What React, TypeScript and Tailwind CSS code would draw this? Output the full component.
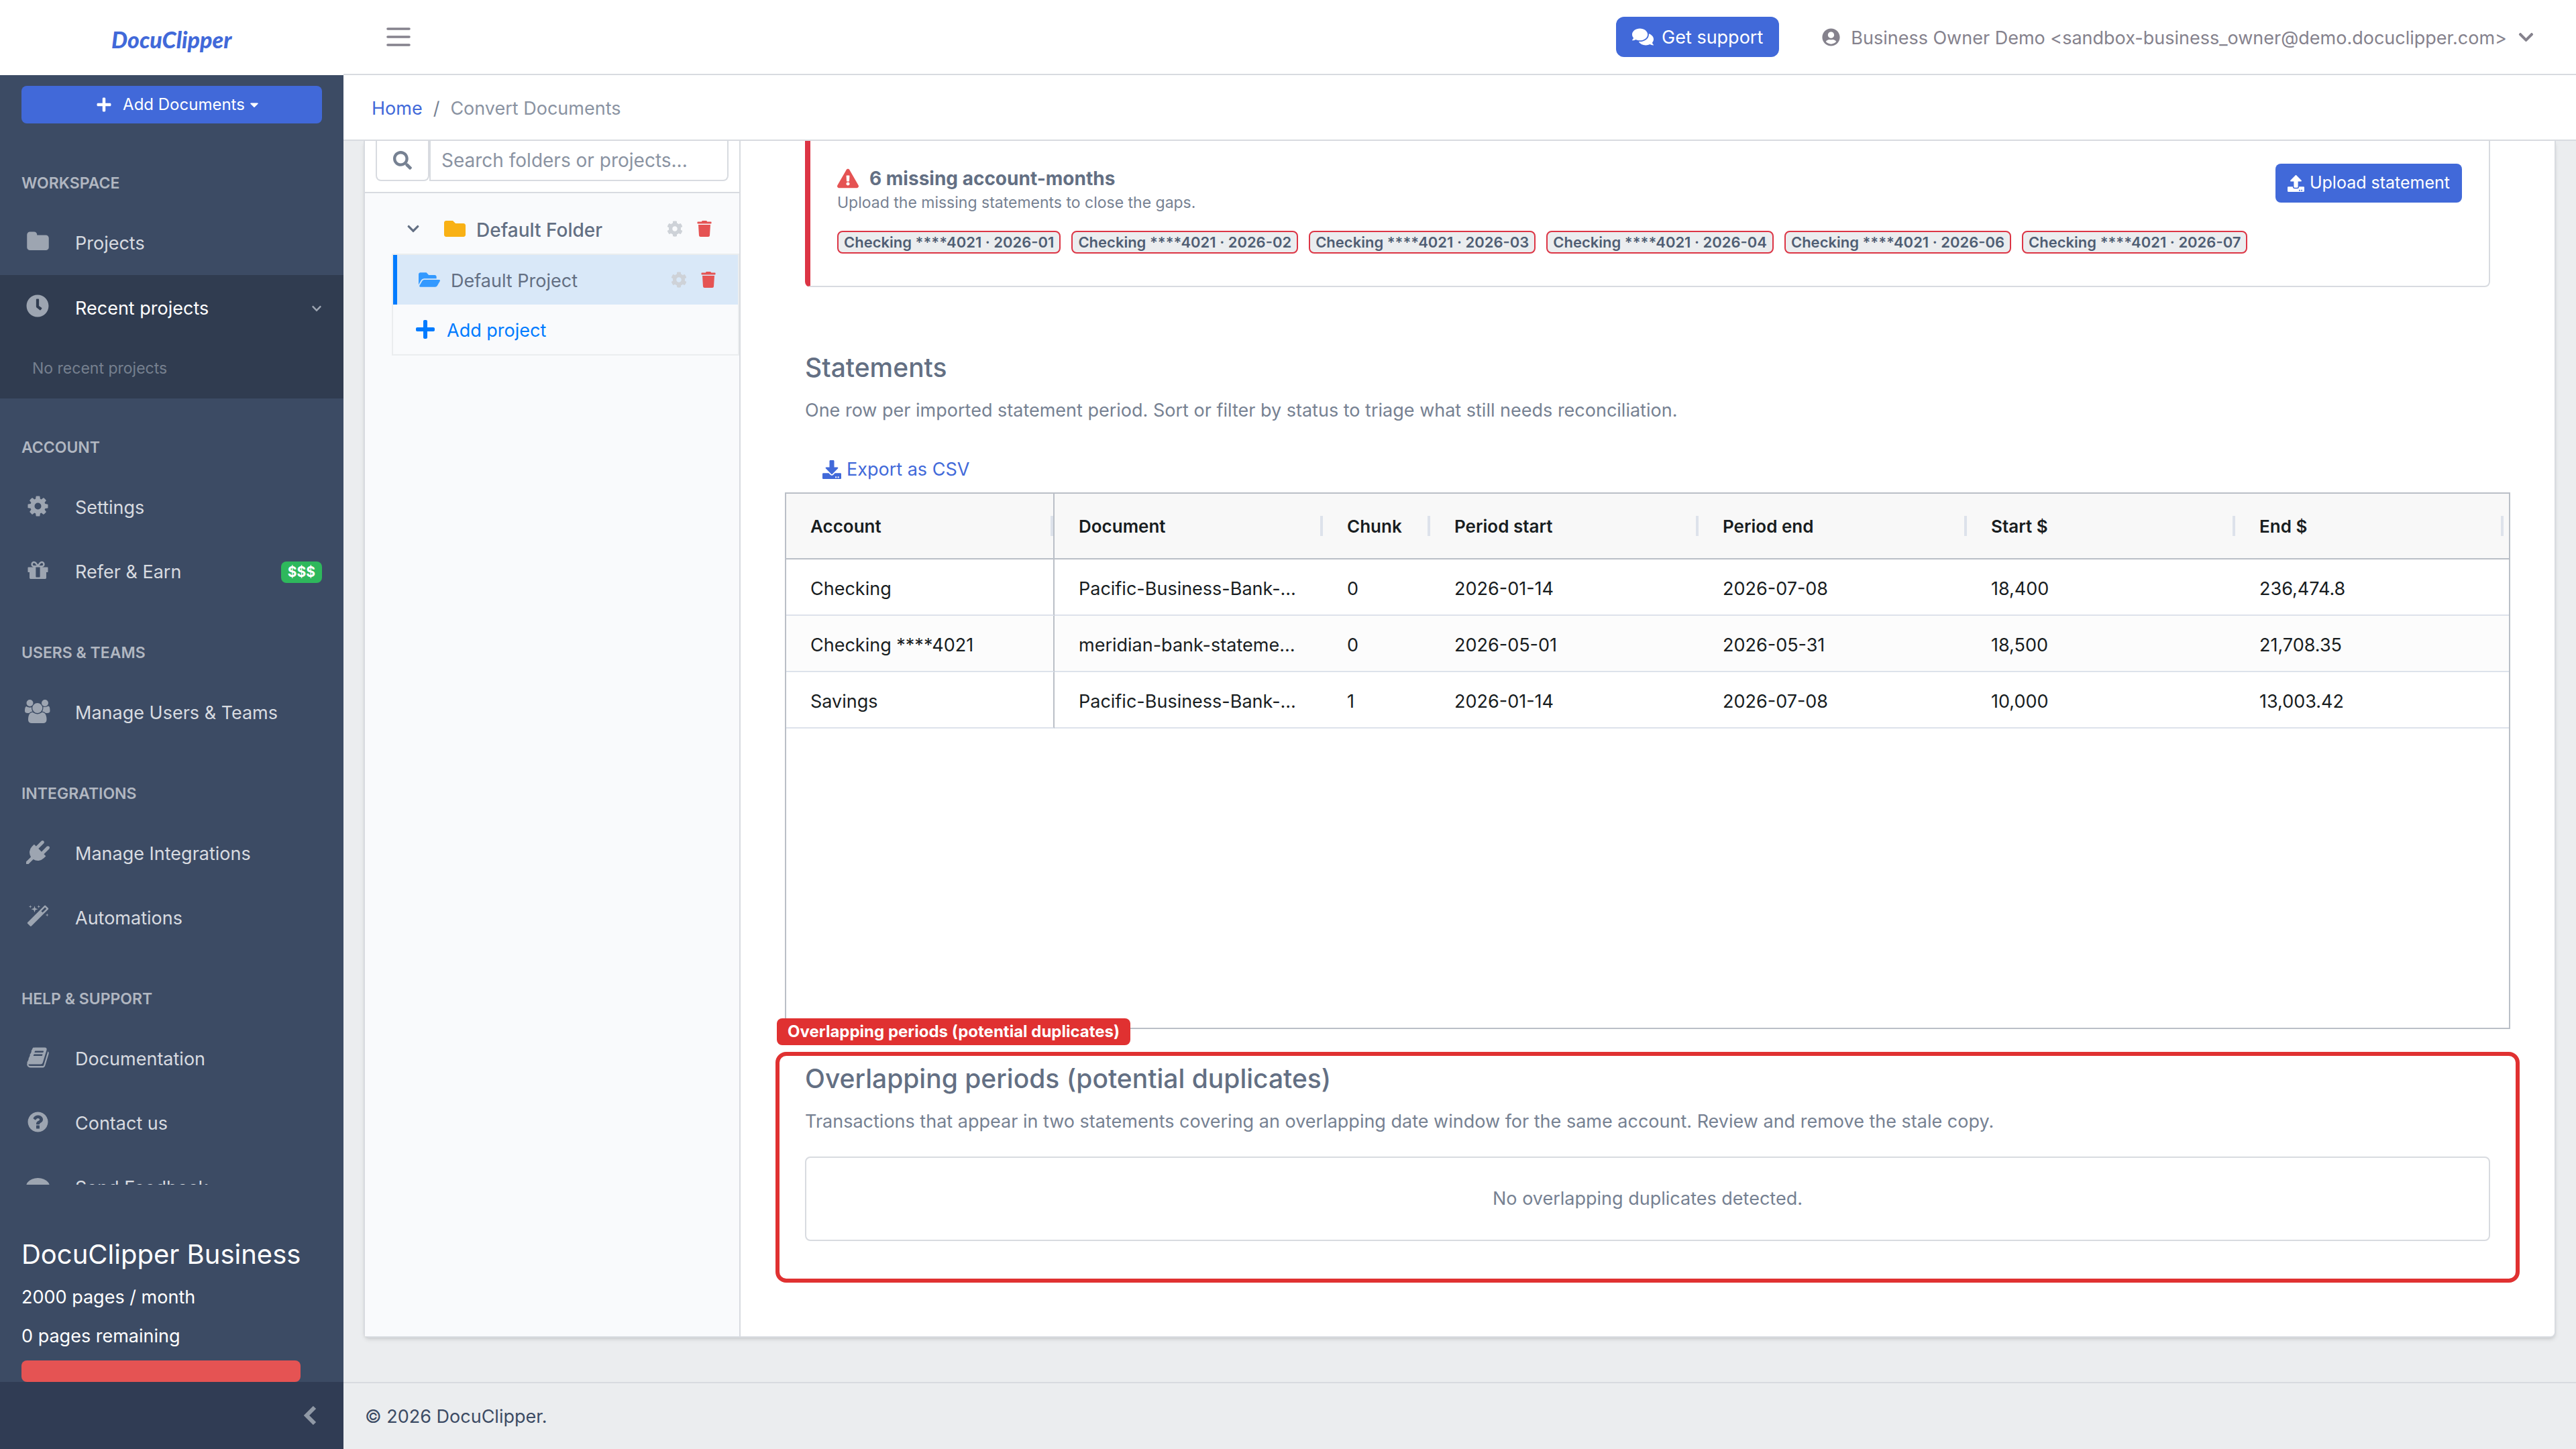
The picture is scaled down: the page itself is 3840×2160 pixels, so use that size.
import type { ReactNode } from "react";
import {
  FaChevronDown, FaCaretDown, FaClock, FaCog, FaComments, FaDownload, FaExclamationTriangle,
  FaFolder, FaFolderOpen, FaPlus, FaSearch, FaTrash, FaUpload, FaUserCircle,
} from "react-icons/fa";

const icons = {
  folder: "M1728 608v704q0 92-66 158t-158 66h-1216q-92 0-158-66t-66-158v-960q0-92 66-158t158-66h320q92 0 158 66t66 158v32h672q92 0 158 66t66 158z",
  cog: "M1152 896q0-106-75-181t-181-75-181 75-75 181 75 181 181 75 181-75 75-181zm512-109v222q0 12-8 23t-20 13l-185 28q-19 54-39 91 35 50 107 138 10 12 10 25t-9 23q-27 37-99 108t-94 71q-12 0-26-9l-138-108q-44 23-91 38-16 136-29 186-7 28-36 28h-222q-14 0-24.5-8.5t-11.5-21.5l-28-184q-49-16-90-37l-141 107q-10 9-25 9-14 0-25-11-126-114-165-168-7-10-7-23 0-12 8-23 15-21 51-66.5t54-70.5q-27-50-41-99l-183-27q-13-2-21-12.5t-8-23.5v-222q0-12 8-23t19-13l186-28q14-46 39-92-40-57-107-138-10-12-10-24 0-10 9-23 26-36 98.5-107.5t94.5-71.5q13 0 26 10l138 107q44-23 91-38 16-136 29-186 7-28 36-28h222q14 0 24.5 8.5t11.5 21.5l28 184q49 16 90 37l142-107q9-9 24-9 13 0 25 10 129 119 165 170 7 8 7 22 0 12-8 23-15 21-51 66.5t-54 70.5q26 50 41 98l183 28q13 2 21 12.5t8 23.5z",
  gift: "M1056 1356v-716h-320v716q0 25 18 38.5t46 13.5h192q28 0 46-13.5t18-38.5zm-456-844h195l-126-161q-26-31-69-31-40 0-68 28t-28 68 28 68 68 28zm688-96q0-40-28-68t-68-28q-43 0-69 31l-125 161h194q40 0 68-28t28-68zm376 256v320q0 14-9 23t-23 9h-96v416q0 40-28 68t-68 28h-1088q-40 0-68-28t-28-68v-416h-96q-14 0-23-9t-9-23v-320q0-14 9-23t23-9h440q-93 0-158.5-65.5t-65.5-158.5 65.5-158.5 158.5-65.5q107 0 168 77l128 165 128-165q61-77 168-77 93 0 158.5 65.5t65.5 158.5-65.5 158.5-158.5 65.5h440q14 0 23 9t9 23z",
  users: "M593 896q-162 5-265 128h-134q-82 0-138-40.5t-56-118.5q0-353 124-353 6 0 43.5 21t97.5 42.5 119 21.5q67 0 133-23-5 37-5 66 0 159 81 288zm1071 637q0 120-73 189.5t-194 69.5h-874q-121 0-194-69.5t-73-189.5q0-53 3.5-103.5t14-109 26.5-108.5 43-97.5 62-81 85.5-53.5 111.5-20q10 0 43 21.5t73 48 107 48 135 21.5 135-21.5 107-48 73-48 43-21.5q61 0 111.5 20t85.5 53.5 62 81 43 97.5 26.5 108.5 14 109 3.5 103.5zm-1024-1277q0 106-75 181t-181 75-181-75-75-181 75-181 181-75 181 75 75 181zm704 384q0 159-112.5 271.5t-271.5 112.5-271.5-112.5-112.5-271.5 112.5-271.5 271.5-112.5 271.5 112.5 112.5 271.5zm576 225q0 78-56 118.5t-138 40.5h-134q-103-123-265-128 81-129 81-288 0-29-5-66 66 23 133 23 59 0 119-21.5t97.5-42.5 43.5-21q124 0 124 353zm-128-609q0 106-75 181t-181 75-181-75-75-181 75-181 181-75 181 75 75 181z",
  plug: "M1755 453q37 38 37 90.5t-37 90.5l-401 400 150 150-160 160q-163 163-389.5 186.5t-411.5-100.5l-362 362h-181v-181l362-362q-124-185-100.5-411.5t186.5-389.5l160-160 150 150 400-401q38-37 91-37t90 37 37 90.5-37 90.5l-400 401 234 234 401-400q38-37 91-37t90 37z",
  magic: "M1254 581l293-293-107-107-293 293zm447-293q0 27-18 45l-1286 1286q-18 18-45 18t-45-18l-198-198q-18-18-18-45t18-45l1286-1286q18-18 45-18t45 18l198 198q18 18 18 45zm-1351-190l98 30-98 30-30 98-30-98-98-30 98-30 30-98zm350 162l196 60-196 60-60 196-60-196-196-60 196-60 60-196zm930 478l98 30-98 30-30 98-30-98-98-30 98-30 30-98zm-640-640l98 30-98 30-30 98-30-98-98-30 98-30 30-98z",
  book: "M1703 478q40 57 18 129l-275 906q-19 64-76.5 107.5t-122.5 43.5h-923q-77 0-148.5-53.5t-99.5-131.5q-24-67-2-127 0-4 3-27t4-37q1-8-3-21.5t-3-19.5q2-11 8-21t16.5-23.5 16.5-23.5q23-38 45-91.5t30-91.5q3-10 .5-30t-.5-28q3-11 17-28t17-23q21-36 42-92t25-90q1-9-2.5-32t.5-28q4-13 22-30.5t22-22.5q19-26 42.5-84.5t27.5-96.5q1-8-3-25.5t-2-26.5q2-8 9-18t18-23 17-21q8-12 16.5-30.5t15-35 16-36 19.5-32 26.5-23.5 36-11.5 47.5 5.5l-1 3q38-9 51-9h761q74 0 114 56t18 130l-274 906q-36 119-71.5 153.5t-128.5 34.5h-869q-27 0-38 15-11 16-1 43 24 70 144 70h923q29 0 56-15.5t35-41.5l300-987q7-22 5-57 38 15 59 43zm-1064 2q-4 13 2 22.5t20 9.5h608q13 0 25.5-9.5t16.5-22.5l21-64q4-13-2-22.5t-20-9.5h-608q-13 0-25.5 9.5t-16.5 22.5zm-83 256q-4 13 2 22.5t20 9.5h608q13 0 25.5-9.5t16.5-22.5l21-64q4-13-2-22.5t-20-9.5h-608q-13 0-25.5 9.5t-16.5 22.5z",
  question: "M1024 1376v-192q0-14-9-23t-23-9h-192q-14 0-23 9t-9 23v192q0 14 9 23t23 9h192q14 0 23-9t9-23zm256-672q0-88-55.5-163t-138.5-116-170-41q-243 0-371 213-15 24 8 42l132 100q7 6 19 6 16 0 25-12 53-68 86-92 34-24 86-24 48 0 85.5 26t37.5 59q0 38-20 61t-68 45q-63 28-115.5 86.5t-52.5 125.5v36q0 14 9 23t23 9h192q14 0 23-9t9-23q0-19 21.5-49.5t54.5-49.5q32-18 49-28.5t46-35 44.5-48 28-60.5 12.5-81zm384 192q0 209-103 385.5t-279.5 279.5-385.5 103-385.5-103-279.5-279.5-103-385.5 103-385.5 279.5-279.5 385.5-103 385.5 103 279.5 279.5 103 385.5z",
  comment: "M1792 896q0 174-120 321.5t-326 233-450 85.5q-70 0-145-8-198 175-460 242-49 14-114 22-17 2-30.5-9t-17.5-29v-1q-3-4-.5-12t2-10 4.5-9.5l6-9 7-8.5 8-9q7-8 31-34.5t34.5-38 31-39.5 32.5-51 27-59 26-76q-157-89-247.5-220t-90.5-281q0-174 120-321.5t326-233 450-85.5 450 85.5 326 233 120 321.5z",
};

const columns = ["Account", "Document", "Chunk", "Period start", "Period end", "Start $", "End $"];

const statements = [
  ["Checking", "Pacific-Business-Bank-Statement.pdf", "0", "2026-01-14", "2026-07-08", "18,400", "236,474.8"],
  ["Checking ****4021", "meridian-bank-statement.pdf", "0", "2026-05-01", "2026-05-31", "18,500", "21,708.35"],
  ["Savings", "Pacific-Business-Bank-Statement.pdf", "1", "2026-01-14", "2026-07-08", "10,000", "13,003.42"],
];

const missingMonths = ["2026-01", "2026-02", "2026-03", "2026-04", "2026-06", "2026-07"];

function NavIcon({ name }: { name: keyof typeof icons }) {
  const width = name === "users" ? 1920 : 1792;
  return (
    <svg viewBox={`0 0 ${width} 1792`} className="h-[35px]" fill="currentColor" aria-hidden="true">
      <path d={icons[name]} />
    </svg>
  );
}

function NavTitle({ children }: { children: ReactNode }) {
  return <h2 className="mt-8 px-8 py-6 text-[23px] leading-[34px] font-semibold text-[#b1b7c1]">{children}</h2>;
}

function NavItem({ icon, label, badge }: { icon: keyof typeof icons; label: string; badge?: string }) {
  return (
    <a href="#" className="flex h-24 items-center pt-0.5 pr-8 text-[27px] text-[#d8dbe0]">
      <span className="flex w-28 justify-center pb-1.5 text-[#9da5b1]"><NavIcon name={icon} /></span>
      <span className="flex-1">{label}</span>
      {badge && <span className="rounded-lg bg-[#2eb85c] px-2.5 text-[21px] leading-8 font-bold text-white">{badge}</span>}
    </a>
  );
}

function Sidebar() {
  return (
    <aside className="sticky top-0 flex h-screen w-[512px] shrink-0 flex-col bg-[#3c4b64]">
      <div className="flex h-28 shrink-0 items-center justify-center bg-white">
        <svg viewBox="0 0 184 64" className="h-16 w-[184px]" role="img" aria-label="DocuClipper">
          <text x="2" y="48" fontFamily="Lato, sans-serif" fontStyle="italic" fontWeight="900" fontSize="34" fill="#4169d9">DocuClipper</text>
        </svg>
      </div>
      <div className="px-8 pt-4 pb-4">
        <button className="flex h-14 w-full items-center justify-center gap-4 rounded-lg bg-[#4169d9] pl-5 text-[24px] text-white">
          <FaPlus /> <span className="flex items-center gap-1">Add Documents<FaCaretDown className="text-[20px]" /></span>
        </button>
      </div>

      <nav className="min-h-0 flex-1 overflow-hidden">
        <NavTitle>WORKSPACE</NavTitle>
        <NavItem icon="folder" label="Projects" />
        <div className="h-[184px] bg-[#303c50]">
          <button className="flex h-24 w-full items-center pt-1 pr-8 text-left text-[27px] text-white">
            <span className="flex w-28 justify-center pb-2 text-[34px] text-[#9da5b1]"><FaClock /></span>
            <span className="flex-1">Recent projects</span>
            <FaChevronDown className="text-[16px] text-[#9da5b1]" />
          </button>
          <p className="px-12 pt-[26px] text-[23px] leading-[34px] text-[#76808f]">No recent projects</p>
        </div>
        <NavTitle>ACCOUNT</NavTitle>
        <NavItem icon="cog" label="Settings" />
        <NavItem icon="gift" label="Refer &amp; Earn" badge="$$$" />
        <NavTitle>USERS &amp; TEAMS</NavTitle>
        <NavItem icon="users" label="Manage Users &amp; Teams" />
        <NavTitle>INTEGRATIONS</NavTitle>
        <NavItem icon="plug" label="Manage Integrations" />
        <NavItem icon="magic" label="Automations" />
        <NavTitle>HELP &amp; SUPPORT</NavTitle>
        <NavItem icon="book" label="Documentation" />
        <NavItem icon="question" label="Contact us" />
        <NavItem icon="comment" label="Send Feedback" />
      </nav>

      <div className="shrink-0 pt-20 pr-16 pl-8 text-[27px] leading-10 text-white">
        <h2 className="text-[40px] leading-[48px] whitespace-nowrap">DocuClipper Business</h2>
        <p className="mt-5">2000 pages / month</p>
        <p className="mt-[18px]">0 pages remaining</p>
        <div className="mt-4 h-8 rounded-lg bg-[#e55353]" />
      </div>
      <button aria-label="Collapse sidebar" className="flex h-[100px] shrink-0 items-center justify-end bg-[#303c54] pr-10 text-[#9099a6]">
        <svg viewBox="0 0 20 28" className="h-7 w-5" fill="none" stroke="currentColor" strokeWidth="6" aria-hidden="true">
          <path d="M17 2L5 14l12 12" />
        </svg>
      </button>
    </aside>
  );
}

function RowActions() {
  return (
    <div className="flex items-center gap-5 text-[24px]">
      <button aria-label="Settings" className="text-[#ced2d8]"><FaCog /></button>
      <button aria-label="Delete" className="text-[#e55353]"><FaTrash /></button>
    </div>
  );
}

function ProjectTree() {
  return (
    <div className="w-[560px] shrink-0 border-r-2 border-[#d8dbe0] bg-[#f9fafc] text-[27px] text-[#636f83]">
      <div className="flex border-b-2 border-[#d8dbe0] bg-white px-4 pb-4">
        <label htmlFor="tree-search" className="flex h-[60px] w-20 items-center justify-center rounded-b-lg border-2 border-t-0 border-[#d8dbe0] text-[28px] text-[#768192]">
          <FaSearch />
          <span className="sr-only">Search</span>
        </label>
        <input
          id="tree-search"
          type="text"
          placeholder="Search folders or projects..."
          className="h-[60px] min-w-0 flex-1 rounded-br-lg border-2 border-t-0 border-[#d8dbe0] px-4 text-[28px] placeholder:text-[#8a93a2]"
        />
      </div>

      <div className="mt-4 flex h-[74px] items-center pr-10 pl-[62px]">
        <FaChevronDown className="text-[20px]" />
        <FaFolder className="ml-9 text-[32px] text-[#f9b115]" />
        <span className="ml-4 flex-1 pt-1 text-[28px] font-medium">Default Folder</span>
        <RowActions />
      </div>
      <div className="ml-10 border-2 border-[#ebedef]">
        <div className="flex h-[74px] items-center border-l-6 border-[#007bff] bg-[#d9e8f8] pr-8 pl-8">
          <FaFolderOpen className="text-[32px] text-[#3399ff]" />
          <span className="ml-4 flex-1 pt-1">Default Project</span>
          <RowActions />
        </div>
        <button className="flex h-[74px] w-full items-center gap-4 pl-8 text-[#007bff]">
          <FaPlus className="text-[32px]" /> <span className="pt-1">Add project</span>
        </button>
      </div>
    </div>
  );
}

function MissingMonths() {
  return (
    <div className="mx-24 rounded-b-lg border-2 border-t-0 border-l-8 border-[#d8dbe0] border-l-[#dc3545] pt-[38px] pr-10 pb-12 pl-10">
      <div className="flex items-start justify-between">
        <div>
          <h3 className="flex items-center gap-4 text-[28px] leading-9 font-bold text-[#636f83]">
            <FaExclamationTriangle className="text-[32px] text-[#e55353]" /> 6 missing account-months
          </h3>
          <p className="text-[23px] leading-9 text-[#768192]">Upload the missing statements to close the gaps.</p>
        </div>
        <button className="-mt-1 flex h-[58px] items-center gap-2 rounded-lg bg-[#4169d9] px-[18px] text-[25px] text-white">
          <FaUpload /> Upload statement
        </button>
      </div>
      <div className="mt-6 flex flex-wrap gap-4">
        {missingMonths.map((m) => (
          <span key={m} className="rounded-lg border-2 border-[#dc3545] bg-[#ebedef] px-2 text-[22px] leading-[30px] font-semibold text-[#4f5d73]">
            Checking ****4021 · {m}
          </span>
        ))}
      </div>
    </div>
  );
}

function StatementsTable() {
  return (
    <div className="mx-[66px] min-h-[800px] border-2 border-[#babfc7]">
      <table className="w-full table-fixed border-separate border-spacing-0 text-left text-[27px] text-[#181d1f]">
        <colgroup>
          <col className="w-[400px]" />
          <col className="w-[400px]" />
          <col className="w-[160px]" />
          <col className="w-[400px]" />
          <col className="w-[400px]" />
          <col className="w-[400px]" />
          <col />
        </colgroup>
        <thead>
          <tr className="h-[98px] bg-[#f8f8f8]">
            {columns.map((c) => (
              <th key={c} className="border-b-2 border-[#babfc7] p-0 text-[26px] font-semibold first:border-r-2">
                <div className="flex h-[30px] max-w-[400px] items-center border-r-4 border-[#dde2eb] pl-9">{c}</div>
              </th>
            ))}
          </tr>
        </thead>
        <tbody>
          {statements.map((row) => (
            <tr key={row[0]} className="h-[84px] even:bg-[#fcfcfc]">
              {row.map((cell, i) => (
                <td key={i} className="truncate border-b-2 border-[#dde2eb] px-9 pt-1.5 pb-0 first:border-r-2 first:border-r-[#babfc7]">{cell}</td>
              ))}
            </tr>
          ))}
        </tbody>
      </table>
    </div>
  );
}

export default function App() {
  return (
    <div className="flex min-h-screen bg-[#ebedef] font-[Inter,sans-serif]">
      <Sidebar />
      <div className="flex min-w-0 flex-1 flex-col">
        <header className="flex h-28 items-center border-b-2 border-[#d8dbe0] bg-white pr-[62px] pl-16 text-[27px] text-[#85828d]">
          <button aria-label="Toggle sidebar">
            <svg viewBox="0 0 36 28" className="h-7 w-9" stroke="currentColor" strokeWidth="3.6" strokeLinecap="round">
              <path d="M2 2h32M2 14h32M2 26h32" />
            </svg>
          </button>
          <button className="ml-auto flex h-[60px] items-center gap-3 rounded-xl bg-[#4169d9] px-6 text-white">
            <FaComments className="text-[32px]" /> <span className="pt-0.5">Get support</span>
          </button>
          <button className="ml-16 flex items-center gap-4">
            <FaUserCircle />
            <span className="pt-1">Business Owner Demo &lt;sandbox-business_owner@demo.docuclipper.com&gt;</span>
            <FaChevronDown className="text-[25px]" />
          </button>
        </header>
        <nav className="flex h-[98px] items-center gap-4 border-b-2 border-[#d8dbe0] bg-white px-[42px] pt-1 text-[27px] text-[#8a93a2]">
          <a href="#" className="text-[#4169d9]">Home</a>
          <span className="text-[#768192]">/</span>
          <span>Convert Documents</span>
        </nav>

        <main className="mx-[30px] flex rounded-b-lg border-2 border-t-0 border-[#d8dbe0] bg-white shadow-md">
          <ProjectTree />
          <div className="min-w-0 flex-1 pb-20 text-[27px]">
            <MissingMonths />

            <div className="mx-24 mt-24">
              <h2 className="text-[39px] leading-[48px] font-medium text-[#636f83]">Statements</h2>
              <p className="mt-5 leading-10 text-[#768192]">
                One row per imported statement period. Sort or filter by status to triage what still needs reconciliation.
              </p>
            </div>
            <button className="mt-10 mb-1.5 ml-[122px] flex h-14 items-center gap-2 text-[#4169d9]">
              <FaDownload className="text-[28px]" /> Export as CSV
            </button>
            <StatementsTable />

            <section className="relative mx-[52px] mt-[34px] rounded-2xl border-6 border-[#e03131] px-[38px] pt-2.5 pb-14">
              <span className="absolute -top-14 -left-1 rounded-lg bg-[#e03131] px-4 text-[24px] leading-10 font-bold text-white">
                Overlapping periods (potential duplicates)
              </span>
              <h2 className="text-[39px] leading-[48px] font-medium text-[#636f83]">Overlapping periods (potential duplicates)</h2>
              <p className="mt-5 leading-10 text-[#768192]">
                Transactions that appear in two statements covering an overlapping date window for the same account. Review and remove the stale copy.
              </p>
              <div className="mt-8 flex h-[126px] items-center justify-center rounded-lg border-2 border-[#d8dbe0] text-[#768192]">
                No overlapping duplicates detected.
              </div>
            </section>
          </div>
        </main>

        <footer className="mt-auto flex h-[100px] items-center border-t-2 border-[#d8dbe0] px-8 pt-0.5 text-[27px] text-[#3c4b64]">
          © 2026 DocuClipper.
        </footer>
      </div>
    </div>
  );
}
